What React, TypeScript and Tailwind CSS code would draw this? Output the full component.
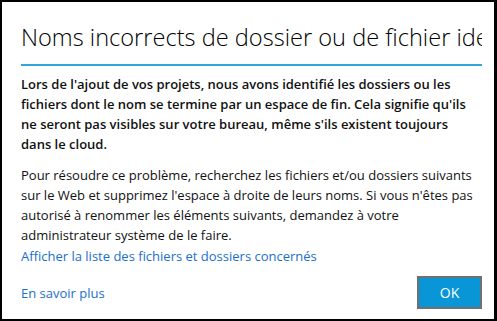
import React from "react";

export default function App() {
  return (
    <div
      className="w-[497px] h-[321px] bg-white border-black border-l-2 border-t-2 border-r-[3px] border-b-2 flex flex-col pl-[19px] pr-[12px] overflow-hidden"
      style={{ fontFamily: '"Open Sans", "Noto Sans", sans-serif' }}
    >
      <div className="overflow-hidden whitespace-nowrap pt-[19px] h-[64px] border-b-2 border-[#33a3dc] text-[23.6px] leading-[32px] text-black font-light">
        Noms incorrects de dossier ou de fichier identifiés
      </div>
      <p className="mt-[8px] text-[13px] leading-[20px] font-semibold text-[#111] whitespace-nowrap">
        Lors de l'ajout de vos projets, nous avons identifié les dossiers ou les
        <br />
        fichiers dont le nom se termine par un espace de fin. Cela signifie qu'ils
        <br />
        ne seront pas visibles sur votre bureau, même s'ils existent toujours
        <br />
        dans le cloud.
      </p>
      <p className="mt-[11px] text-[13px] leading-[20px] text-[#111] whitespace-nowrap">
        Pour résoudre ce problème, recherchez les fichiers et/ou dossiers suivants
        <br />
        sur le Web et supprimez l'espace à droite de leurs noms. Si vous n'êtes pas
        <br />
        autorisé à renommer les éléments suivants, demandez à votre
        <br />
        administrateur système de le faire.
      </p>
      <a className="mt-[1px] text-[13px] leading-[20px] text-[#1a6fc9] whitespace-nowrap self-start">
        Afficher la liste des fichiers et dossiers concernés
      </a>
      <div className="mt-auto mb-[10px] flex items-center justify-between">
        <a className="text-[13px] leading-[20px] text-[#1a6fc9]">En savoir plus</a>
        <button className="w-[65px] h-[33px] bg-[#0896d7] border-2 border-[#707070] text-white text-[14px]">
          OK
        </button>
      </div>
    </div>
  );
}
